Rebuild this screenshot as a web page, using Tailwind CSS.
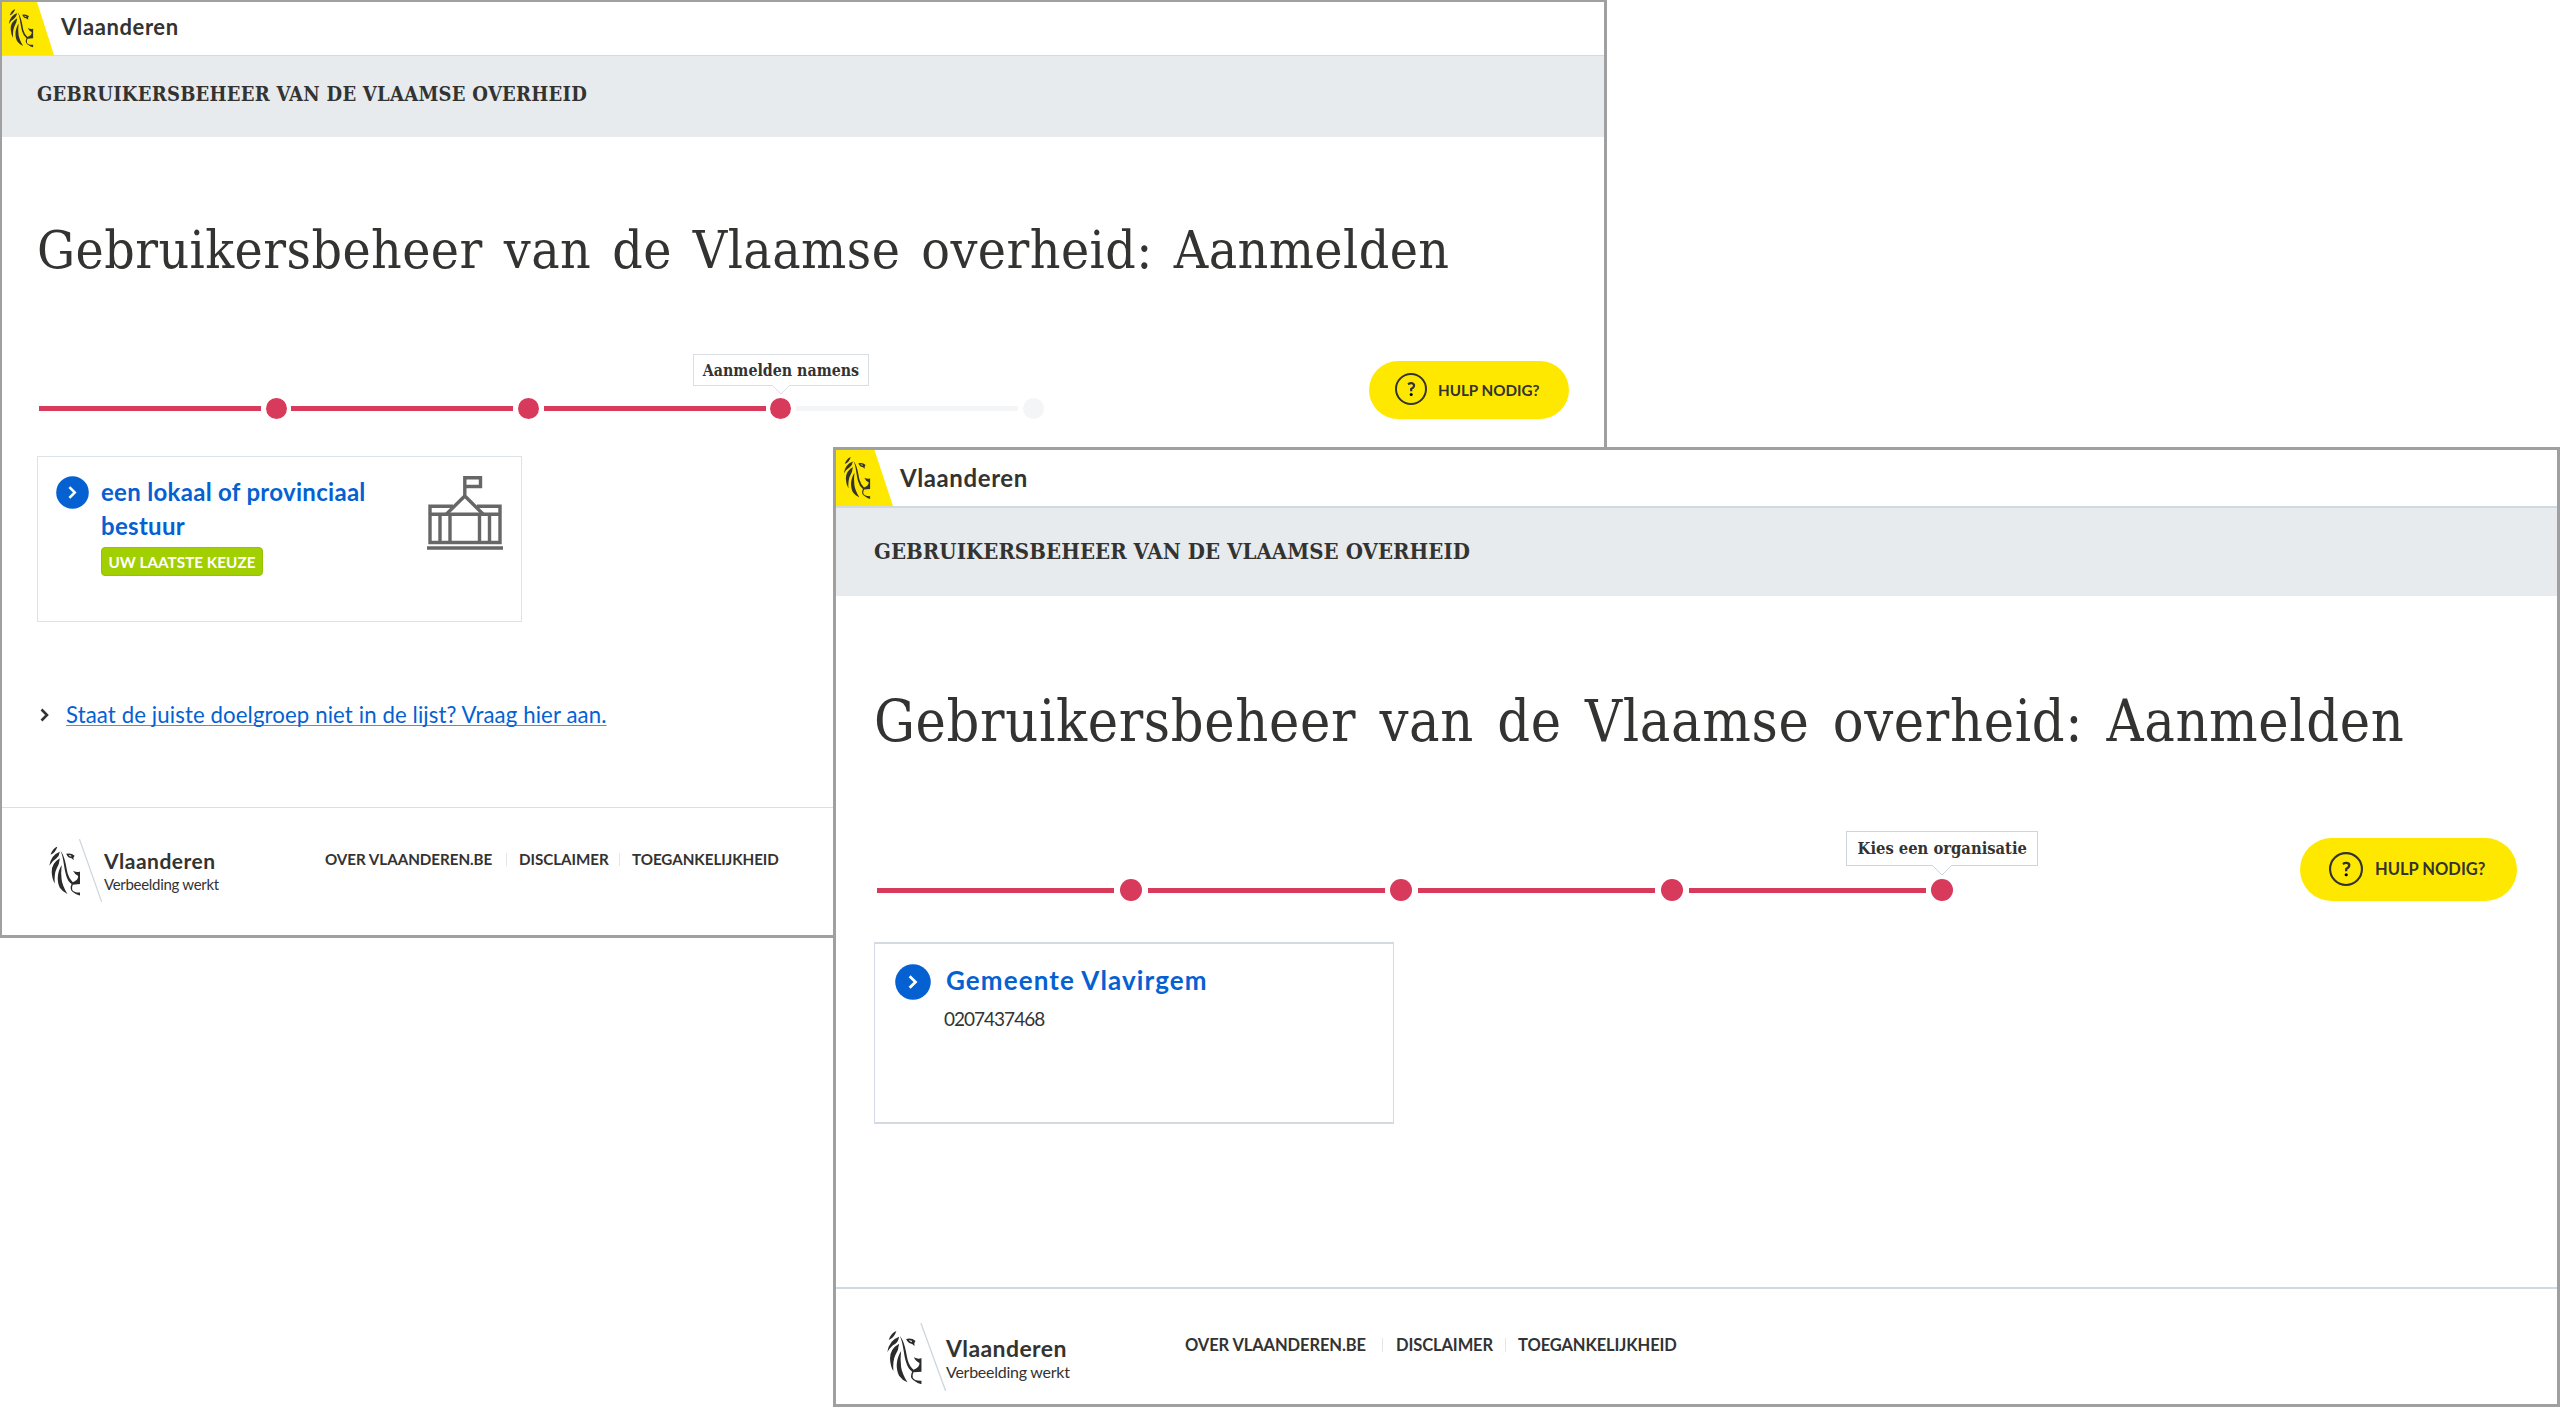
<!DOCTYPE html>
<html lang="nl">
<head>
<meta charset="utf-8">
<title>Gebruikersbeheer van de Vlaamse overheid</title>
<script src="https://cdn.jsdelivr.net/npm/@tailwindcss/browser@4"></script>
</head>
<body class="relative h-[1407px] w-[2560px] overflow-hidden bg-white font-['Lato',sans-serif] text-[#333332]">

<svg class="hidden">
  <symbol id="lion" viewBox="52 62 104 160" preserveAspectRatio="none">
    <path d="M80 62Q64 68 57 89Q74 82 80 62Z"/>
    <path d="M88 79Q58 90 53 125Q63 108 76 101Q86 94 88 79Z"/>
    <path d="M88 100Q60 116 61 145Q62 168 71 182Q69 150 77 134Q87 118 88 100Z"/>
    <path d="M94 122C78 148 78 175 88 196Q97 209 113 216Q97 190 94 170Q91 148 94 122Z"/>
    <path d="M90 76C101 98 101 130 109 156Q114 175 127 184Q119 200 130 209Q142 219 155 222V211Q134 212 129 202Q127 194 131 186L155 184V143Q146 148 132 141Q138 154 149 158Q149 172 131 178Q119 168 114 150C108 122 105 94 90 76Z"/>
    <path fill-rule="evenodd" d="M109 86Q126 82 137 92Q131 98 134 107Q128 99 118 98Q112 94 109 86ZM117 90Q120 95 126 95Q129 91 117 90Z"/>
  </symbol>
  <symbol id="brand" viewBox="52 38 176 204" preserveAspectRatio="none">
    <use href="#lion" x="52" y="62" width="104" height="160"/>
    <path d="M153 38L227 242" fill="none" stroke="#cdd6df" stroke-width="4"/>
  </symbol>
  <symbol id="help" viewBox="0 0 32 32" preserveAspectRatio="none">
    <circle cx="16" cy="16" r="15" fill="none" stroke="currentColor" stroke-width="2"/>
    <path d="M13 11.2Q15.4 9.8 17.6 10.4Q19.6 11.2 18.9 13.4Q18.4 14.8 16.2 16V18.2" fill="none" stroke="currentColor" stroke-width="2.2"/>
    <circle cx="16.2" cy="21.4" r="1.5"/>
  </symbol>
  <symbol id="go" viewBox="0 0 33 33">
    <circle cx="16.5" cy="16.5" r="16.3" fill="#0561d2"/>
    <path d="M13.4 11.2L18.8 16.5L13.4 21.8" fill="none" stroke="#fff" stroke-width="2.5"/>
  </symbol>
</svg>

<!-- Window 1: choose on whose behalf to sign in -->
<section class="absolute left-0 top-0 flex h-[938px] w-[1607px] flex-col border-t-2 border-r-3 border-b-3 border-l-2 border-[#a0a0a0] bg-white">
  <header class="flex h-[53px] shrink-0">
    <div class="relative h-[53px] w-[52px]">
      <svg class="block h-full w-full" viewBox="0 0 52 53"><path fill="#ffe800" d="M0 0H35L52 53H0Z"/><use href="#lion" x="6.5" y="7" width="25" height="38.5" fill="#333332"/></svg>
    </div>
    <div class="ml-[7px] text-[22px] leading-[50px] font-bold tracking-[0.6px]">Vlaanderen</div>
  </header>
  <div class="h-[82px] shrink-0 border-t border-[#d6dade] bg-[#e7ebee] pl-[35px] font-['DejaVu_Serif_Condensed','DejaVu_Serif',serif] text-[20px] leading-[77px] font-bold tracking-[0.25px] whitespace-nowrap">GEBRUIKERSBEHEER VAN DE VLAAMSE OVERHEID</div>

  <main class="flex flex-col">
    <h1 class="mt-[81px] pl-[35px] font-['DejaVu_Serif_Condensed','DejaVu_Serif',serif] text-[53px] leading-[64px] font-normal tracking-[0.45px] [word-spacing:5.4px] whitespace-nowrap">Gebruikersbeheer van de Vlaamse overheid: Aanmelden</h1>

    <div class="mt-[79px] flex h-[58px] items-end justify-between pr-[35px] pl-[37px]">
      <div class="flex items-center gap-[4.7px]">
        <div class="h-[5px] w-[222px] bg-[#d73a5b]"></div><div class="size-[21px] rounded-full bg-[#d73a5b]"></div>
        <div class="h-[5px] w-[222px] bg-[#d73a5b]"></div><div class="size-[21px] rounded-full bg-[#d73a5b]"></div>
        <div class="h-[5px] w-[222px] bg-[#d73a5b]"></div>
        <div class="relative size-[21px] rounded-full bg-[#d73a5b]">
          <div class="absolute bottom-[33px] left-1/2 h-8 w-[176px] -translate-x-1/2 border border-[#d9dfe5] bg-white text-center font-['DejaVu_Serif_Condensed','DejaVu_Serif',serif] text-[15.8px] leading-[31px] font-bold whitespace-nowrap">Aanmelden namens
            <svg class="absolute top-[29px] left-[78px]" width="18" height="11" viewBox="0 0 18 11"><path d="M0 1L9 10L18 1" fill="#fff" stroke="#d9dfe5"/><path d="M1 0.5H17" stroke="#fff" stroke-width="2"/></svg>
          </div>
        </div>
        <div class="h-[5px] w-[222px] bg-[#f3f5f7]"></div><div class="size-[21px] rounded-full bg-[#f3f5f7]"></div>
      </div>
      <div class="flex h-[58px] w-[200px] items-center rounded-full bg-[#ffe800] pl-[26px]">
        <svg class="-mt-[2px] size-8"><use href="#help" width="32" height="32"/></svg>
        <span class="ml-[11px] text-[15.2px] font-bold whitespace-nowrap">HULP NODIG?</span>
      </div>
    </div>

    <div class="mt-[37px] ml-[35px] flex h-[166px] w-[485px] items-start border border-[#dde2e6] pt-[18px] pr-[18px] pl-[18px]">
      <svg class="mt-[1px] size-[33px]"><use href="#go" width="33" height="33"/></svg>
      <div class="ml-[12px] w-[290px] text-[#0561d2]">
        <div class="text-[24px] leading-[34px] font-bold tracking-[0.3px]">een lokaal of provinciaal bestuur</div>
        <div class="mt-1 h-[29px] w-[162px] rounded-[4px] border border-[#97c200] bg-[#a2cf00] text-center text-[15.3px] leading-[29px] font-bold whitespace-nowrap text-white">UW LAATSTE KEUZE</div>
      </div>
      <svg class="mt-[1px] ml-auto" width="76" height="74" viewBox="0 0 76 74" fill="none" stroke="#676767" stroke-width="3.4">
        <path d="M0 72H76M2.7 30.2H26M50 30.2H73.3M3 28.5V68M73 28.5V68M1.3 38.2H74.7M1.3 66.5H74.7M13 38V66M23 38V66M52.5 38V66M62.5 38V66"/>
        <path d="M19 38.5L37.8 20L56.5 38.5M37.8 21V1.7H53.5V10.5H38"/>
      </svg>
    </div>

    <div class="mt-[78px] flex h-[30px] items-center pl-[38px]">
      <svg width="10" height="14" viewBox="0 0 10 14"><path d="M1.5 1.5L7 7L1.5 12.5" fill="none" stroke="#333332" stroke-width="2.6"/></svg>
      <a class="ml-[16px] text-[22.2px] leading-[30px] tracking-[0.11px] whitespace-nowrap text-[#0561d2] underline decoration-[#4a93e2] decoration-1 underline-offset-[2px] [text-decoration-skip-ink:none]">Staat de juiste doelgroep niet in de lijst? Vraag hier aan.</a>
    </div>
  </main>

  <footer class="mt-[77px] flex grow border-t border-[#d9dfe5] pl-[47px]">
    <svg class="mt-[31px] h-[63px] w-[53px]" fill="#2b2b2b"><use href="#brand" width="53" height="63"/></svg>
    <div class="mt-[40px] ml-[2px] w-[221px]">
      <div class="text-[21px] leading-[26px] font-bold tracking-[0.5px]">Vlaanderen</div>
      <div class="-mt-[2px] text-[15px] leading-[24px] tracking-[-0.3px]">Verbeelding werkt</div>
    </div>
    <nav class="mt-[40px] flex h-[22px] items-center text-[15.2px] leading-[22px] font-bold tracking-[-0.05px] whitespace-nowrap">
      <span class="w-[181px]">OVER VLAANDEREN.BE</span><span class="h-[13px] w-px bg-[#e3e7ea]"></span>
      <span class="w-[112px] pl-[12px]">DISCLAIMER</span><span class="h-[13px] w-px bg-[#e3e7ea]"></span>
      <span class="pl-[12px]">TOEGANKELIJKHEID</span>
    </nav>
  </footer>
</section>

<!-- Window 2: choose an organisation -->
<section class="absolute top-[447px] left-[833px] flex h-[960px] w-[1727px] flex-col border-3 border-[#a0a0a0] bg-white">
  <header class="flex h-[56px] shrink-0">
    <div class="h-[56px] w-[57px]">
      <svg class="block h-full w-full" viewBox="0 0 57 56" preserveAspectRatio="none"><path fill="#ffe800" d="M0 0H38.5L57 56H0Z"/><use href="#lion" x="7.5" y="7" width="27" height="42" fill="#333332"/></svg>
    </div>
    <div class="ml-[7px] text-[24px] leading-[55px] font-bold tracking-[0.6px]">Vlaanderen</div>
  </header>
  <div class="h-[90px] shrink-0 border-t-2 border-[#d1d9e0] bg-[#e7ebee] pl-[38px] font-['DejaVu_Serif_Condensed','DejaVu_Serif',serif] text-[22px] leading-[87px] font-bold tracking-[0.05px] whitespace-nowrap">GEBRUIKERSBEHEER VAN DE VLAAMSE OVERHEID</div>

  <main class="flex flex-col">
    <h1 class="mt-[90px] mb-[1px] pl-[38px] font-['DejaVu_Serif_Condensed','DejaVu_Serif',serif] text-[57px] leading-[70px] font-normal tracking-[0.65px] [word-spacing:6.4px] whitespace-nowrap">Gebruikersbeheer van de Vlaamse overheid: Aanmelden</h1>

    <div class="mt-[81px] flex h-[63px] items-end justify-between pr-[40px] pl-[41px]">
      <div class="flex items-center gap-[5.75px]">
        <div class="h-[5px] w-[237px] bg-[#d73a5b]"></div><div class="size-[22px] rounded-full bg-[#d73a5b]"></div>
        <div class="h-[5px] w-[237px] bg-[#d73a5b]"></div><div class="size-[22px] rounded-full bg-[#d73a5b]"></div>
        <div class="h-[5px] w-[237px] bg-[#d73a5b]"></div><div class="size-[22px] rounded-full bg-[#d73a5b]"></div>
        <div class="h-[5px] w-[237px] bg-[#d73a5b]"></div>
        <div class="relative size-[22px] rounded-full bg-[#d73a5b]">
          <div class="absolute bottom-[35px] left-1/2 h-[35px] w-[192px] -translate-x-1/2 border border-[#cdd5dd] bg-white text-center font-['DejaVu_Serif_Condensed','DejaVu_Serif',serif] text-[16.4px] leading-[34px] font-bold whitespace-nowrap">Kies een organisatie
            <svg class="absolute top-[32px] left-[85px]" width="20" height="12" viewBox="0 0 20 12"><path d="M0 1L10 11L20 1" fill="#fff" stroke="#cdd5dd"/><path d="M1 0.5H19" stroke="#fff" stroke-width="2"/></svg>
          </div>
        </div>
      </div>
      <div class="flex h-[63px] w-[217px] items-center rounded-full bg-[#ffe800] pl-[29px]">
        <svg class="-mt-[1px] size-[34px]"><use href="#help" width="34" height="34"/></svg>
        <span class="ml-[12px] text-[16.5px] font-bold whitespace-nowrap">HULP NODIG?</span>
      </div>
    </div>

    <div class="mt-[41px] ml-[38px] flex h-[182px] w-[520px] items-start border-x border-y-2 border-[#d3dae1] pt-[18px] pl-[20px]">
      <svg class="mt-[2px] size-[36px]"><use href="#go" width="36" height="36"/></svg>
      <div class="ml-[15px]">
        <div class="text-[26px] leading-[36px] font-bold tracking-[1.1px] whitespace-nowrap text-[#0561d2]">Gemeente Vlavirgem</div>
        <div class="mt-[7px] -ml-[2px] text-[19px] leading-[28px] tracking-[-1px]">0207437468</div>
      </div>
    </div>
  </main>

  <footer class="mt-[163px] flex grow border-t-2 border-[#d1d9e0] pl-[51px]">
    <svg class="mt-[34px] h-[68px] w-[59px]" fill="#2b2b2b"><use href="#brand" width="59" height="68"/></svg>
    <div class="mt-[45px] w-[239px]">
      <div class="text-[23px] leading-[28px] font-bold tracking-[0.4px]">Vlaanderen</div>
      <div class="-mt-[3px] text-[16px] leading-[26px] tracking-[-0.25px]">Verbeelding werkt</div>
    </div>
    <nav class="mt-[44px] flex h-[24px] items-center text-[16.5px] leading-[24px] font-bold tracking-[-0.1px] whitespace-nowrap">
      <span class="w-[197px]">OVER VLAANDEREN.BE</span><span class="h-[14px] w-px bg-[#e3e7ea]"></span>
      <span class="w-[122px] pl-[13px]">DISCLAIMER</span><span class="h-[14px] w-px bg-[#e3e7ea]"></span>
      <span class="pl-[12px]">TOEGANKELIJKHEID</span>
    </nav>
  </footer>
</section>
</body>
</html>
